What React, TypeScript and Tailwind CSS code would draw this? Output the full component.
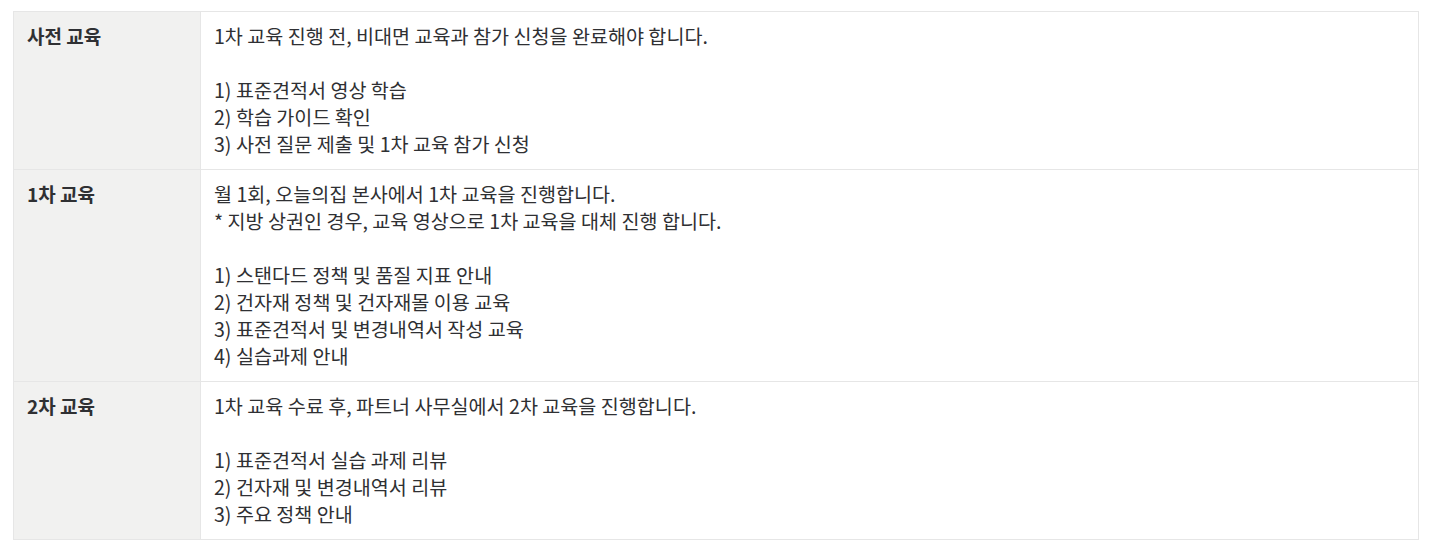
const rows: { label: string; lines: string[] }[] = [
  {
    label: "사전 교육",
    lines: [
      "1차 교육 진행 전, 비대면 교육과 참가 신청을 완료해야 합니다.",
      "",
      "1) 표준견적서 영상 학습",
      "2) 학습 가이드 확인",
      "3) 사전 질문 제출 및 1차 교육 참가 신청",
    ],
  },
  {
    label: "1차 교육",
    lines: [
      "월 1회, 오늘의집 본사에서 1차 교육을 진행합니다.",
      "* 지방 상권인 경우, 교육 영상으로 1차 교육을 대체 진행 합니다.",
      "",
      "1) 스탠다드 정책 및 품질 지표 안내",
      "2) 건자재 정책 및 건자재몰 이용 교육",
      "3) 표준견적서 및 변경내역서 작성 교육",
      "4) 실습과제 안내",
    ],
  },
  {
    label: "2차 교육",
    lines: [
      "1차 교육 수료 후, 파트너 사무실에서 2차 교육을 진행합니다.",
      "",
      "1) 표준견적서 실습 과제 리뷰",
      "2) 건자재 및 변경내역서 리뷰",
      "3) 주요 정책 안내",
    ],
  },
];

export default function App() {
  return (
    <div className="min-h-screen bg-white pt-[11px] pl-[13px] pr-[14px] font-['Noto_Sans_CJK_KR','Noto_Sans',sans-serif] leading-[27px] text-[#2f3033]">
      <table className="w-full border-collapse border border-[#e6e6e6]">
        <tbody>
          {rows.map((r) => (
            <tr key={r.label} className="border-b border-[#e6e6e6]">
              <th className="w-[187px] bg-[#f1f1f0] border-r border-[#e6e6e6] px-[13px] pt-[10px] pb-[12px] text-left align-top text-[19px] font-bold">
                {r.label}
              </th>
              <td className="pl-[13px] pr-[13px] pt-[10px] pb-[12px] align-top text-[19.6px]">
                {r.lines.map((l, i) => (
                  <div key={i} className="h-[27px] whitespace-pre">
                    {l}
                  </div>
                ))}
              </td>
            </tr>
          ))}
        </tbody>
      </table>
    </div>
  );
}
